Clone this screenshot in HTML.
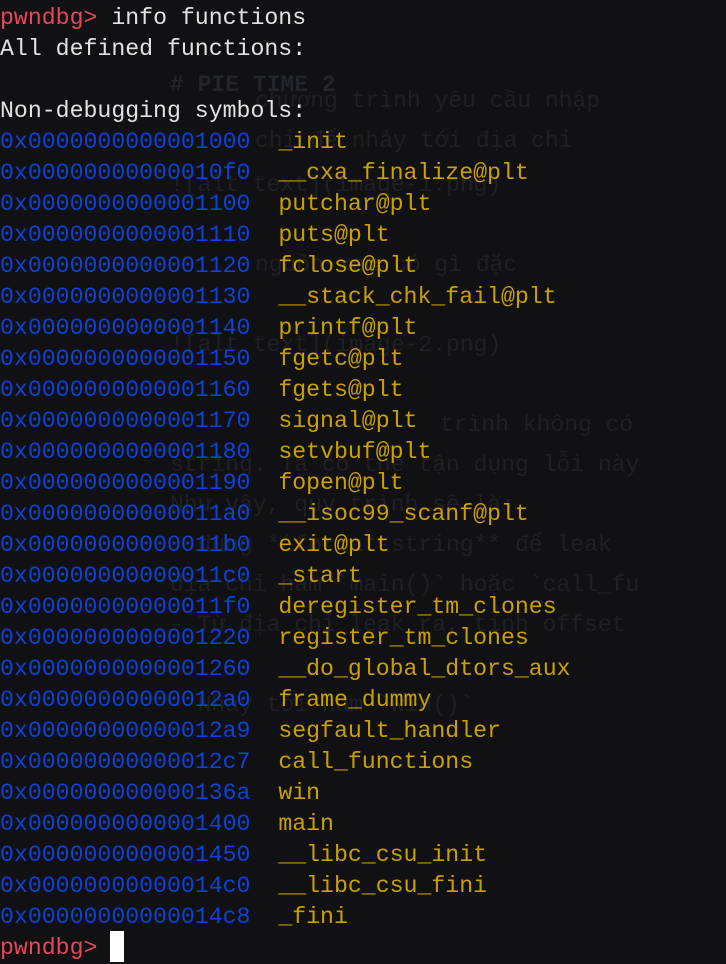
<!DOCTYPE html>
<html><head><meta charset="utf-8"><style>
html,body{margin:0;padding:0;background:#111113;width:726px;height:962px;overflow:hidden}
.g{position:absolute;font-family:"Liberation Mono",monospace;font-size:23px;color:#1e2023;white-space:pre}
pre{position:absolute;left:0;top:3px;margin:0;font-family:"Liberation Mono","DejaVu Sans Mono",monospace;font-size:23.2px;line-height:31px;color:#e2e2e2;white-space:pre}
.r{color:#e5485a}.b{color:#0d42d6}.y{color:#c9a000}
.cur{position:absolute;left:110px;top:931px;width:14px;height:31px;background:#fff}
</style></head><body>
<div class="g" style="left:170px;top:72px;font-weight:bold;color:#222529"># PIE TIME 2</div>
<div class="g" style="left:255px;top:88px">chương trình yêu cầu nhập</div>
<div class="g" style="left:255px;top:128px">chỉ để nhảy tới địa chỉ</div>
<div class="g" style="left:170px;top:172px">![alt text](image-1.png)</div>
<div class="g" style="left:255px;top:252px">nguồn xem có gì đặc</div>
<div class="g" style="left:170px;top:332px">![alt text](image-2.png)</div>
<div class="g" style="left:440px;top:412px">trình không có</div>
<div class="g" style="left:170px;top:452px">string. Ta có thể tận dụng lỗi này</div>
<div class="g" style="left:170px;top:492px">Như vậy, quy trình sẽ là:<br></div>
<div class="g" style="left:170px;top:532px">  dùng **format-string** để leak</div>
<div class="g" style="left:170px;top:572px">địa chỉ hàm `main()` hoặc `call_fu</div>
<div class="g" style="left:170px;top:612px">- Từ địa chỉ leak ra, tính offset</div>
<div class="g" style="left:170px;top:692px">- Nhảy tới hàm `win()`</div>
<pre><span class="r">pwndbg&gt;</span> info functions
All defined functions:

Non-debugging symbols:
<span class="b">0x0000000000001000</span>  <span class="y">_init</span>
<span class="b">0x00000000000010f0</span>  <span class="y">__cxa_finalize@plt</span>
<span class="b">0x0000000000001100</span>  <span class="y">putchar@plt</span>
<span class="b">0x0000000000001110</span>  <span class="y">puts@plt</span>
<span class="b">0x0000000000001120</span>  <span class="y">fclose@plt</span>
<span class="b">0x0000000000001130</span>  <span class="y">__stack_chk_fail@plt</span>
<span class="b">0x0000000000001140</span>  <span class="y">printf@plt</span>
<span class="b">0x0000000000001150</span>  <span class="y">fgetc@plt</span>
<span class="b">0x0000000000001160</span>  <span class="y">fgets@plt</span>
<span class="b">0x0000000000001170</span>  <span class="y">signal@plt</span>
<span class="b">0x0000000000001180</span>  <span class="y">setvbuf@plt</span>
<span class="b">0x0000000000001190</span>  <span class="y">fopen@plt</span>
<span class="b">0x00000000000011a0</span>  <span class="y">__isoc99_scanf@plt</span>
<span class="b">0x00000000000011b0</span>  <span class="y">exit@plt</span>
<span class="b">0x00000000000011c0</span>  <span class="y">_start</span>
<span class="b">0x00000000000011f0</span>  <span class="y">deregister_tm_clones</span>
<span class="b">0x0000000000001220</span>  <span class="y">register_tm_clones</span>
<span class="b">0x0000000000001260</span>  <span class="y">__do_global_dtors_aux</span>
<span class="b">0x00000000000012a0</span>  <span class="y">frame_dummy</span>
<span class="b">0x00000000000012a9</span>  <span class="y">segfault_handler</span>
<span class="b">0x00000000000012c7</span>  <span class="y">call_functions</span>
<span class="b">0x000000000000136a</span>  <span class="y">win</span>
<span class="b">0x0000000000001400</span>  <span class="y">main</span>
<span class="b">0x0000000000001450</span>  <span class="y">__libc_csu_init</span>
<span class="b">0x00000000000014c0</span>  <span class="y">__libc_csu_fini</span>
<span class="b">0x00000000000014c8</span>  <span class="y">_fini</span>
<span class="r">pwndbg&gt;</span> </pre>
<div class="cur"></div>
</body></html>
